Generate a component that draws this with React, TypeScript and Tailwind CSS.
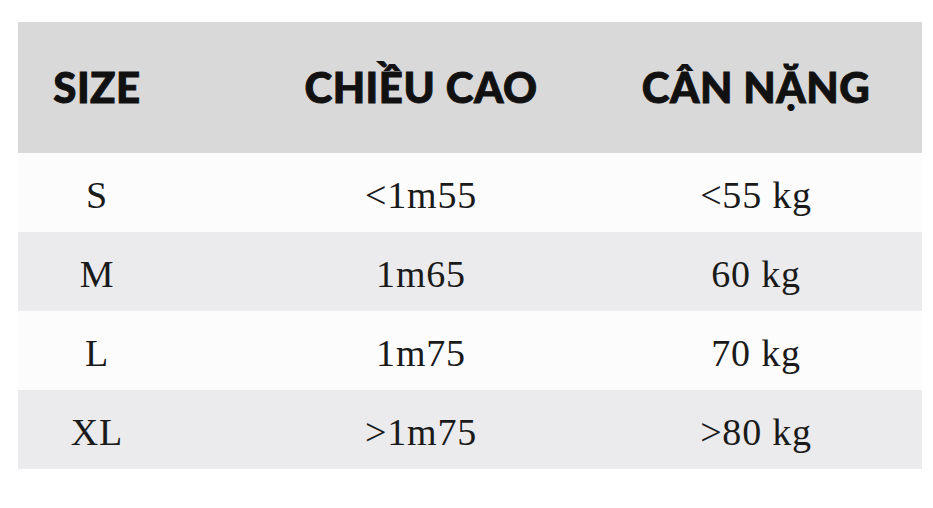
import React from "react";

const rows = [
  { size: "S", h: "<1m55", w: "<55 kg", bg: "bg-[#fdfcfd]" },
  { size: "M", h: "1m65", w: "60 kg", bg: "bg-[#ebebed]" },
  { size: "L", h: "1m75", w: "70 kg", bg: "bg-[#fdfcfd]" },
  { size: "XL", h: ">1m75", w: ">80 kg", bg: "bg-[#ebebed]" },
];

const cols = "grid grid-cols-[158px_490px_180px_1fr]";

export default function App() {
  return (
    <div className="w-[933px] h-[508px] bg-white pt-[22px] pl-[18px]">
      <div className="w-[904px]">
        <div
          className={`${cols} h-[131px] items-center bg-[#d9d9d9] text-[#111] text-[42px] font-black leading-none tracking-[0.5px] whitespace-nowrap [-webkit-text-stroke:0.9px_#111] font-['Lato','Noto_Sans',sans-serif]`}
        >
          <div className="flex justify-center pb-[2px]">SIZE</div>
          <div className="flex justify-center pb-[2px]">CHIỀU CAO</div>
          <div className="flex justify-center pb-[2px]">CÂN NẶNG</div>
          <div />
        </div>
        {rows.map((r) => (
          <div
            key={r.size}
            className={`${cols} h-[79px] items-center ${r.bg} text-[#1a1a1a] text-[38px] leading-none tracking-[0.8px] font-['Liberation_Serif','Times_New_Roman',serif]`}
          >
            <div className="text-center pt-[5px]">{r.size}</div>
            <div className="text-center pt-[5px]">{r.h}</div>
            <div className="text-center pt-[5px]">{r.w}</div>
            <div />
          </div>
        ))}
      </div>
    </div>
  );
}
